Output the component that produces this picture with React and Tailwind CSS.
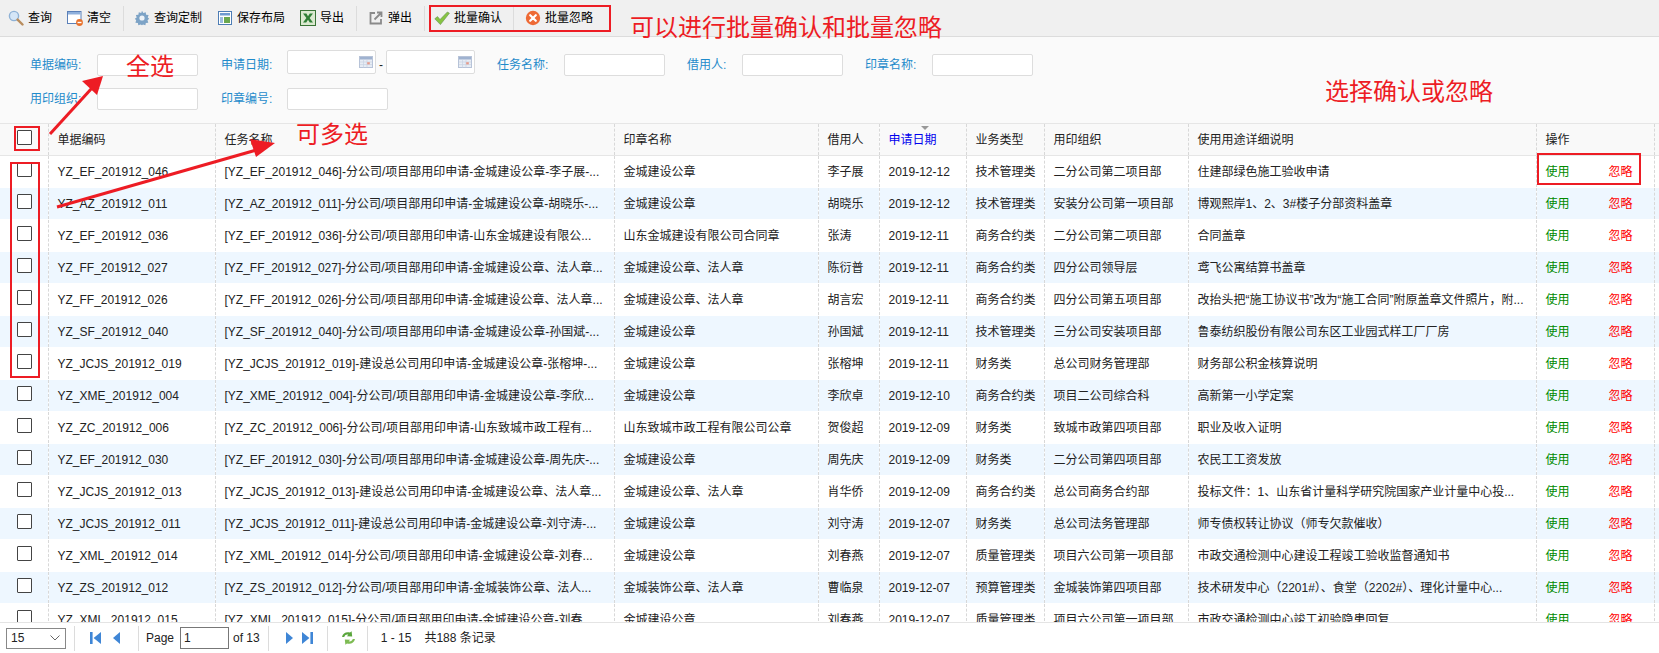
import React from "react";

const rows = [
  ["YZ_EF_201912_046", "[YZ_EF_201912_046]-分公司/项目部用印申请-金城建设公章-李子展-...", "金城建设公章", "李子展", "2019-12-12", "技术管理类", "二分公司第二项目部", "住建部绿色施工验收申请"],
  ["YZ_AZ_201912_011", "[YZ_AZ_201912_011]-分公司/项目部用印申请-金城建设公章-胡晓乐-...", "金城建设公章", "胡晓乐", "2019-12-12", "技术管理类", "安装分公司第一项目部", "博观熙岸1、2、3#楼子分部资料盖章"],
  ["YZ_EF_201912_036", "[YZ_EF_201912_036]-分公司/项目部用印申请-山东金城建设有限公...", "山东金城建设有限公司合同章", "张涛", "2019-12-11", "商务合约类", "二分公司第二项目部", "合同盖章"],
  ["YZ_FF_201912_027", "[YZ_FF_201912_027]-分公司/项目部用印申请-金城建设公章、法人章...", "金城建设公章、法人章", "陈衍普", "2019-12-11", "商务合约类", "四分公司领导层", "鸢飞公寓结算书盖章"],
  ["YZ_FF_201912_026", "[YZ_FF_201912_026]-分公司/项目部用印申请-金城建设公章、法人章...", "金城建设公章、法人章", "胡言宏", "2019-12-11", "商务合约类", "四分公司第五项目部", "改抬头把“施工协议书”改为“施工合同”附原盖章文件照片\uFF0C附..."],
  ["YZ_SF_201912_040", "[YZ_SF_201912_040]-分公司/项目部用印申请-金城建设公章-孙国斌-...", "金城建设公章", "孙国斌", "2019-12-11", "技术管理类", "三分公司安装项目部", "鲁泰纺织股份有限公司东区工业园式样工厂厂房"],
  ["YZ_JCJS_201912_019", "[YZ_JCJS_201912_019]-建设总公司用印申请-金城建设公章-张榕坤-...", "金城建设公章", "张榕坤", "2019-12-11", "财务类", "总公司财务管理部", "财务部公积金核算说明"],
  ["YZ_XME_201912_004", "[YZ_XME_201912_004]-分公司/项目部用印申请-金城建设公章-李欣...", "金城建设公章", "李欣卓", "2019-12-10", "商务合约类", "项目二公司综合科", "高新第一小学定案"],
  ["YZ_ZC_201912_006", "[YZ_ZC_201912_006]-分公司/项目部用印申请-山东致城市政工程有...", "山东致城市政工程有限公司公章", "贺俊超", "2019-12-09", "财务类", "致城市政第四项目部", "职业及收入证明"],
  ["YZ_EF_201912_030", "[YZ_EF_201912_030]-分公司/项目部用印申请-金城建设公章-周先庆-...", "金城建设公章", "周先庆", "2019-12-09", "财务类", "二分公司第四项目部", "农民工工资发放"],
  ["YZ_JCJS_201912_013", "[YZ_JCJS_201912_013]-建设总公司用印申请-金城建设公章、法人章...", "金城建设公章、法人章", "肖华侨", "2019-12-09", "商务合约类", "总公司商务合约部", "投标文件\uFF1A1、山东省计量科学研究院国家产业计量中心投..."],
  ["YZ_JCJS_201912_011", "[YZ_JCJS_201912_011]-建设总公司用印申请-金城建设公章-刘守涛-...", "金城建设公章", "刘守涛", "2019-12-07", "财务类", "总公司法务管理部", "师专债权转让协议\uFF08师专欠款催收\uFF09"],
  ["YZ_XML_201912_014", "[YZ_XML_201912_014]-分公司/项目部用印申请-金城建设公章-刘春...", "金城建设公章", "刘春燕", "2019-12-07", "质量管理类", "项目六公司第一项目部", "市政交通检测中心建设工程竣工验收监督通知书"],
  ["YZ_ZS_201912_012", "[YZ_ZS_201912_012]-分公司/项目部用印申请-金城装饰公章、法人...", "金城装饰公章、法人章", "曹临泉", "2019-12-07", "预算管理类", "金城装饰第四项目部", "技术研发中心\uFF082201#\uFF09、食堂\uFF082202#\uFF09、理化计量中心..."],
  ["YZ_XML_201912_015", "[YZ_XML_201912_015]-分公司/项目部用印申请-金城建设公章-刘春", "金城建设公章", "刘春燕", "2019-12-07", "质量管理类", "项目六公司第一项目部", "市政交通检测中心竣工初验隐患回复"],
];

const SearchIcon = () => (
  <svg width="16" height="16" viewBox="0 0 16 16">
    <circle cx="6" cy="6" r="4.6" fill="#d5e6f7" stroke="#8fb2d6" strokeWidth="1.4" />
    <path d="M9.6 9.6 14.5 14.5" stroke="#b98d5e" strokeWidth="2.4" strokeLinecap="round" />
  </svg>
);

const ClearIcon = () => (
  <svg width="16" height="16" viewBox="0 0 16 16">
    <rect x="0.5" y="1.5" width="13.5" height="12" fill="#fff" stroke="#5b80b8" />
    <rect x="1" y="2" width="12.5" height="2.5" fill="#8fb0dc" />
    <circle cx="12.5" cy="12.5" r="3.4" fill="#e8702a" />
    <rect x="10.5" y="11.8" width="4" height="1.4" fill="#fff" />
  </svg>
);

const GearIcon = () => (
  <svg width="16" height="16" viewBox="0 0 16 16">
    <path d="M8 .8 9.3 3l2.4-.8.4 2.5 2.5.4-.8 2.4L15.2 8.8 13.5 10.3l.8 2.4-2.5.4-.4 2.1-2.4-.8L8 15.2l-1.3-.8-2.4.8-.4-2.1-2.5-.4.8-2.4L.8 8.8l1.9-1.3-.8-2.4 2.5-.4.4-2.5 2.4.8Z" fill="#7da3c6" />
    <circle cx="8" cy="8" r="2.6" fill="#eef3f8" />
  </svg>
);

const LayoutIcon = () => (
  <svg width="16" height="16" viewBox="0 0 16 16">
    <rect x="1.5" y="1.5" width="13" height="13" fill="#fff" stroke="#4d7db5" />
    <rect x="3" y="3" width="10" height="2.5" fill="#6f9bd0" />
    <rect x="3" y="7" width="3" height="6" fill="#9dbde0" />
    <rect x="7" y="7" width="6" height="6" fill="#6aa84f" />
  </svg>
);

const ExcelIcon = () => (
  <svg width="16" height="16" viewBox="0 0 16 16">
    <rect x="0.5" y="0.5" width="15" height="15" fill="#dbe9d0" stroke="#3a7436" />
    <path d="M3 3.5h3.4L8 6.2 9.8 3.5H13L9.6 8 13 12.5H9.8L8 9.8 6.2 12.5H3L6.4 8Z" fill="#2f7f35" />
  </svg>
);

const PopupIcon = () => (
  <svg width="16" height="16" viewBox="0 0 16 16" fill="none" stroke="#8a8a8a" strokeWidth="1.8">
    <path d="M7 3H2.5v10.5H13V9" />
    <path d="M6.5 9.5 13 3M9 2.5h4.5V7" />
  </svg>
);

const CheckIcon = () => (
  <svg width="16" height="16" viewBox="0 0 16 16">
    <path d="M.8 8.8 3.5 6.6 6 9.6 13.4 2l2 1.2L6.4 14.6Z" fill="#86c440" stroke="#6e9a5a" strokeWidth="0.7" />
  </svg>
);

const CancelIcon = () => (
  <svg width="16" height="16" viewBox="0 0 16 16">
    <circle cx="8" cy="8" r="7.2" fill="#ee6a35" />
    <path d="M5.2 5.2 10.8 10.8M10.8 5.2 5.2 10.8" stroke="#fff" strokeWidth="2.2" strokeLinecap="round" />
  </svg>
);

const CalendarIcon = () => (
  <svg width="14" height="12" viewBox="0 0 14 12">
    <rect x="0.5" y="0.5" width="13" height="11" fill="#e8edf5" stroke="#b7c3d8" />
    <rect x="1" y="1" width="12" height="2.5" fill="#9fb2d0" />
    <path d="M1 6h12M1 8.6h12M4.5 3.5v8M8 3.5v8" stroke="#c8d2e2" strokeWidth="0.7" />
    <rect x="8.2" y="6.2" width="2.6" height="2.2" fill="#e59a8a" />
  </svg>
);

const PagerIcon = ({ dir, bar }) => (
  <svg width="11" height="14" viewBox="0 0 11 14">
    {dir === "left" ? (
      <>
        {bar && <rect x="0" y="1" width="2.6" height="12" fill="#3f86d6" />}
        <path d={bar ? "M11 1v12L3.6 7Z" : "M8 1v12L1 7Z"} fill="#3f86d6" />
      </>
    ) : (
      <>
        <path d={bar ? "M0 1v12l7.4-6Z" : "M3 1v12l7-6Z"} fill="#3f86d6" />
        {bar && <rect x="8.4" y="1" width="2.6" height="12" fill="#3f86d6" />}
      </>
    )}
  </svg>
);

const RefreshIcon = () => (
  <svg width="17" height="16" viewBox="0 0 17 16">
    <path d="M2 7C2.6 3.4 6.4 1.4 10 2.6l1.6-1.4.6 5.4-5.4-.4 1.5-1.5C6.6 4.2 4.9 5 4.2 7Z" fill="#5aa63c" />
    <path d="M15 9c-.6 3.6-4.4 5.6-8 4.4l-1.6 1.4-.6-5.4 5.4.4-1.5 1.5c1.7.5 3.4-.3 4.1-2.3Z" fill="#7dbb52" />
  </svg>
);

const Divider = ({ className }) => <div className={`w-px h-[25px] bg-[#dcdcdc] ${className}`} />;

const ToolBtn = ({ icon, label }) => (
  <div className="flex items-center gap-1 text-black">
    {icon}
    <span>{label}</span>
  </div>
);

const Label = ({ className, children }) => (
  <div className={`text-[#1f8bcb] shrink-0 ${className}`}>{children}</div>
);

const TextInput = () => (
  <div className="w-[101px] h-[22px] bg-white border border-[#dddddd] rounded-[2px] shrink-0" />
);

const DateInput = () => (
  <div className="w-[89px] h-[24px] -mt-[6px] bg-white border border-[#dddddd] rounded-[2px] shrink-0 flex items-center justify-end pr-[2px]">
    <CalendarIcon />
  </div>
);

const RedBox = ({ className }) => (
  <div className={`absolute border-2 border-[#ed1c24] pointer-events-none ${className}`} />
);

const Note = ({ className, children }) => (
  <div className={`absolute text-[24px] leading-[28px] text-[#ed1c24] whitespace-nowrap ${className}`}>{children}</div>
);

const Box = () => (
  <input type="checkbox" className="appearance-none block w-[15px] h-[15px] -mt-1 ml-[17px] bg-white border border-[#444444] rounded-[1px]" />
);

const th = "font-normal text-left px-[9px] border-r border-dashed border-[#d8d8d8] whitespace-nowrap";
const td = "px-[9px] border-r border-dashed border-[#d8d8d8] whitespace-nowrap overflow-hidden";

export default function App() {
  return (
    <div className="relative w-[1659px] h-[653px] flex flex-col overflow-hidden bg-white text-[12px] text-[#222222] [font-family:'Liberation_Sans','Noto_Sans_CJK_SC',sans-serif]">
      {/* toolbar */}
      <div className="h-[37px] shrink-0 flex items-center pl-2 bg-[#f0f0f0] border-b border-[#dcdcdc]">
        <div className="flex gap-[15px]">
          <ToolBtn icon={<SearchIcon />} label="查询" />
          <ToolBtn icon={<ClearIcon />} label="清空" />
        </div>
        <Divider className="ml-3 mr-[10px]" />
        <div className="flex gap-[15px]">
          <ToolBtn icon={<GearIcon />} label="查询定制" />
          <ToolBtn icon={<LayoutIcon />} label="保存布局" />
          <ToolBtn icon={<ExcelIcon />} label="导出" />
        </div>
        <Divider className="ml-3 mr-[11px]" />
        <ToolBtn icon={<PopupIcon />} label="弹出" />
        <Divider className="ml-3 mr-[9px]" />
        <ToolBtn icon={<CheckIcon />} label="批量确认" />
        <Divider className="ml-[11px] mr-[11px]" />
        <ToolBtn icon={<CancelIcon />} label="批量忽略" />
      </div>

      {/* filters */}
      <div className="h-[86px] shrink-0 bg-[#fafafa] pl-[30px] pt-[17px]">
        <div className="flex items-center h-[22px]">
          <Label className="w-[67px]">单据编码:</Label>
          <TextInput />
          <Label className="w-[66px] ml-[23px]">申请日期:</Label>
          <DateInput />
          <span className="w-[10px] text-center">-</span>
          <DateInput />
          <Label className="w-[67px] ml-[22px]">任务名称:</Label>
          <TextInput />
          <Label className="w-[55px] ml-[22px]">借用人:</Label>
          <TextInput />
          <Label className="w-[67px] ml-[22px]">印章名称:</Label>
          <TextInput />
        </div>
        <div className="flex items-center h-[22px] mt-3">
          <Label className="w-[67px]">用印组织:</Label>
          <TextInput />
          <Label className="w-[66px] ml-[23px]">印章编号:</Label>
          <TextInput />
        </div>
      </div>

      {/* grid */}
      <div className="flex-1 min-h-0 overflow-hidden">
        <table className="table-fixed w-[1659px] border-collapse">
          <colgroup>
            <col className="w-[48px]" />
            <col className="w-[167px]" />
            <col className="w-[399px]" />
            <col className="w-[204px]" />
            <col className="w-[61px]" />
            <col className="w-[87px]" />
            <col className="w-[78px]" />
            <col className="w-[144px]" />
            <col className="w-[348px]" />
            <col className="w-[118px]" />
            <col className="w-[5px]" />
          </colgroup>
          <thead>
            <tr className="h-[32px] bg-[#f9f9f9] border-y border-[#e6e6e6]">
              <th className="border-r border-dashed border-[#d8d8d8] p-0"><Box /></th>
              <th className={th}>单据编码</th>
              <th className={th}>任务名称</th>
              <th className={th}>印章名称</th>
              <th className={th}>借用人</th>
              <th className={`${th} text-[#0000ee] relative`}>
                <span className="absolute top-[2px] left-[41px] w-0 h-0 border-x-[4px] border-x-transparent border-t-[4px] border-t-[#999999]" />
                申请日期
              </th>
              <th className={th}>业务类型</th>
              <th className={th}>用印组织</th>
              <th className={th}>使用用途详细说明</th>
              <th className={th}>操作</th>
              <th className="border-r border-dashed border-[#d8d8d8]" />
            </tr>
          </thead>
          <tbody>
            {rows.map((r, i) => (
              <tr key={r[0]} className={`h-[32px] border-b border-white ${i % 2 ? "bg-[#eef7ff]" : "bg-white"}`}>
                <td className="border-r border-dashed border-[#d8d8d8] p-0"><Box /></td>
                {r.map((v, j) => (
                  <td key={j} className={td}>{v}</td>
                ))}
                <td className={td}>
                  <div className="flex justify-between pr-3">
                    <span className="text-[#008a00]">使用</span>
                    <span className="text-[#ff0000]">忽略</span>
                  </div>
                </td>
                <td className="border-r border-dashed border-[#d8d8d8]" />
              </tr>
            ))}
          </tbody>
        </table>
      </div>

      {/* pager */}
      <div className="h-[31px] shrink-0 flex items-center pl-[6px] bg-white border-t border-[#e4e4e4] text-[#222222]">
        <div className="w-[60px] h-[21px] border border-[#888888] flex items-center justify-between pl-[4px] pr-[5px] shrink-0">
          <span>15</span>
          <svg width="10" height="6" viewBox="0 0 10 6" fill="none" stroke="#666666"><path d="M.5.5 5 5 9.5.5" /></svg>
        </div>
        <Divider className="ml-2 mr-[15px]" />
        <PagerIcon dir="left" bar />
        <div className="w-[11px]" />
        <PagerIcon dir="left" />
        <Divider className="ml-[15px] mr-[7px]" />
        <span>Page</span>
        <div className="w-[49px] h-[22px] border border-[#777777] ml-[6px] flex items-center pl-[3px]">1</div>
        <span className="ml-1">of 13</span>
        <Divider className="ml-2 mr-[14px]" />
        <PagerIcon dir="right" />
        <div className="w-2" />
        <PagerIcon dir="right" bar />
        <Divider className="ml-[14px] mr-3" />
        <RefreshIcon />
        <Divider className="ml-[10px] mr-[13px]" />
        <span>1 - 15</span>
        <span className="ml-[13px]">共188 条记录</span>
      </div>

      {/* red annotations on top of the page */}
      <RedBox className="left-[429px] top-[5px] w-[182px] h-[27px]" />
      <RedBox className="left-[14px] top-[126px] w-[26px] h-[25px]" />
      <RedBox className="left-[10px] top-[162px] w-[30px] h-[216px]" />
      <RedBox className="left-[1537px] top-[153px] w-[104px] h-[32px]" />
      <Note className="left-[630px] top-[14px]">可以进行批量确认和批量忽略</Note>
      <Note className="left-[126px] top-[53px]">全选</Note>
      <Note className="left-[296px] top-[121px]">可多选</Note>
      <Note className="left-[1325px] top-[78px]">选择确认或忽略</Note>
      <svg className="absolute inset-0 pointer-events-none" width="1659" height="653" viewBox="0 0 1659 653">
        <path d="M50 134 92 88" stroke="#ed1c24" strokeWidth="3" fill="none" />
        <path d="M103 76 97 95 82 81Z" fill="#ed1c24" />
        <path d="M57 207 260 149" stroke="#ed1c24" strokeWidth="3" fill="none" />
        <path d="M275 143 256 157 250 139Z" fill="#ed1c24" />
      </svg>
    </div>
  );
}
